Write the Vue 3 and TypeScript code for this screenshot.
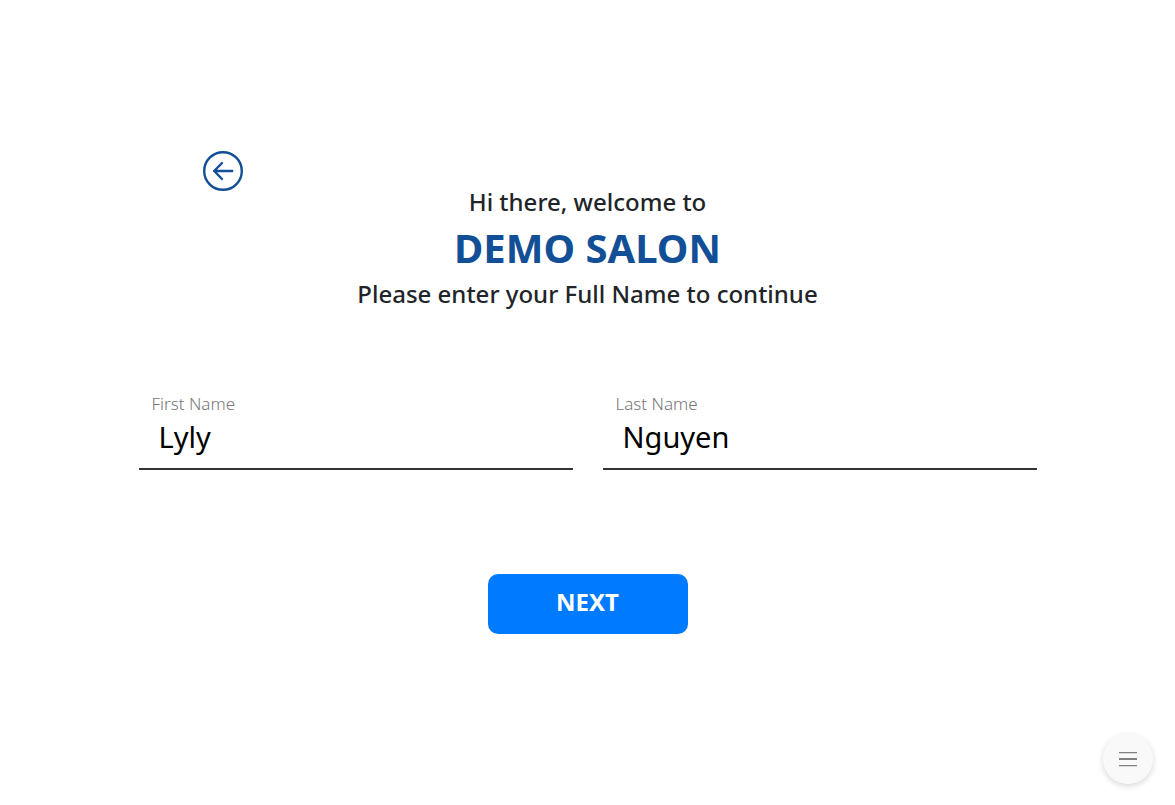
<script setup lang="ts">
import { ref } from 'vue'

const firstName = ref<string>('Lyly')
const lastName = ref<string>('Nguyen')
</script>

<template>
  <main class="page">
    <form class="card" @submit.prevent>
      <button class="back" type="button" aria-label="Back">
        <svg viewBox="0 0 40 40" fill="none" stroke="currentColor" stroke-width="2.4" stroke-linecap="round" stroke-linejoin="round">
          <circle cx="20" cy="20" r="18.8" />
          <path d="M29.2 20H11.2M19 12L11.2 20L19 28" />
        </svg>
      </button>
      <header class="intro">
        <p>Hi there, welcome to</p>
        <h1>DEMO SALON</h1>
        <p>Please enter your Full Name to continue</p>
      </header>
      <div class="fields">
        <div class="field">
          <label for="first-name">First Name</label>
          <input id="first-name" v-model="firstName" type="text" />
        </div>
        <div class="field">
          <label for="last-name">Last Name</label>
          <input id="last-name" v-model="lastName" type="text" />
        </div>
      </div>
      <button class="next" type="submit">NEXT</button>
    </form>
    <button class="menu" type="button" aria-label="Menu">
      <svg viewBox="0 0 18 16" fill="#808080">
        <path d="M0 1H18V2.2H0ZM0 7H18V9H0ZM0 14H18V15.2H0Z" />
      </svg>
    </button>
  </main>
</template>

<style>
body {
  background: #fff;
}
</style>

<style scoped>
.page {
  box-sizing: border-box;
  min-height: 100vh;
  padding: 151px 32px 32px;
  background: #fff;
  color: #212529;
  font-family: "Noto Sans", "Open Sans", sans-serif;
}

.card {
  display: flex;
  flex-direction: column;
  max-width: 898px;
  margin: 0 auto;
}

button {
  border: 0;
  padding: 0;
  font-family: inherit;
  cursor: pointer;
}

.back {
  width: 40px;
  height: 40px;
  margin-left: 64px;
  border-radius: 50%;
  background: none;
  color: #124f96;
}

.back svg {
  display: block;
}

.intro {
  margin-top: -7px;
  text-align: center;
}

.intro p {
  margin: 0;
  font-size: 24px;
  font-weight: 500;
  line-height: 36px;
}

.intro h1 {
  margin: 0;
  color: #124f96;
  font-size: 40px;
  font-weight: 700;
  line-height: 56px;
}

.fields {
  display: grid;
  grid-template-columns: 1fr 1fr;
  gap: 30px;
  margin-top: 80px;
}

.field {
  display: flex;
  flex-direction: column;
  border-bottom: 2px solid #333;
}

.field label {
  padding-left: 13px;
  color: #777;
  font-size: 17px;
  font-weight: 300;
  line-height: 24px;
}

.field input {
  box-sizing: border-box;
  width: 100%;
  height: 52px;
  padding: 0 20px 12px;
  border: 0;
  outline: 0;
  background: none;
  color: #000;
  font-family: inherit;
  font-size: 29px;
  font-weight: 400;
}

.next {
  align-self: center;
  width: 200px;
  height: 60px;
  margin-top: 104px;
  padding-bottom: 6px;
  border-radius: 10px;
  background: #007bff;
  color: #fff;
  font-size: 24px;
  font-weight: 700;
}

.menu {
  position: fixed;
  right: 22px;
  bottom: 21px;
  display: flex;
  align-items: center;
  justify-content: center;
  width: 50px;
  height: 50px;
  border-radius: 50%;
  background: #f9f9f9;
  box-shadow: 0 2px 6px rgba(0, 0, 0, 0.16);
}

.menu svg {
  width: 18px;
  height: 16px;
}
</style>
